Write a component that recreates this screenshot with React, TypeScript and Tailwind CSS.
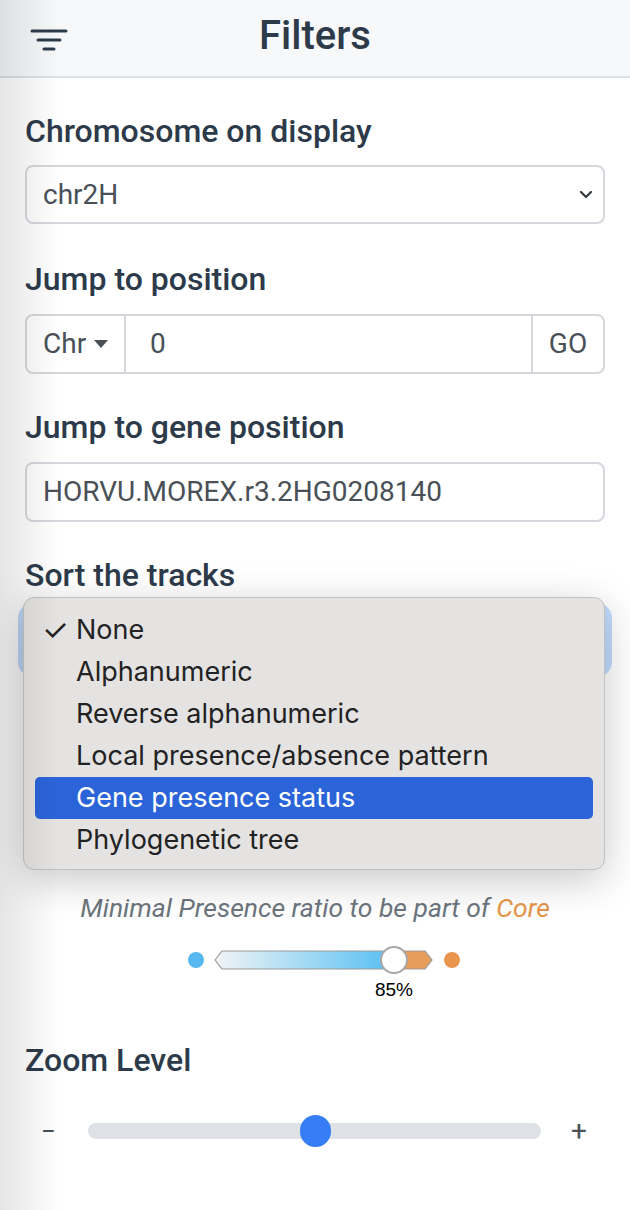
import React from "react";

const labelCls =
  "text-[32px] leading-[37px] font-medium text-[#2d3a4a] font-['Roboto',sans-serif]";
const inputText = "text-[28px] text-[#495057] font-['Roboto',sans-serif]";

function FilterIcon() {
  return (
    <svg width="40" height="24" viewBox="0 0 40 24" className="block">
      <g stroke="#2d3a4a" strokeWidth="3" strokeLinecap="round">
        <line x1="2" y1="3" x2="36" y2="3" />
        <line x1="8" y1="12" x2="30" y2="12" />
        <line x1="14" y1="21" x2="24" y2="21" />
      </g>
    </svg>
  );
}

const items = [
  "None",
  "Alphanumeric",
  "Reverse alphanumeric",
  "Local presence/absence pattern",
  "Gene presence status",
  "Phylogenetic tree",
];

function Dropdown() {
  return (
    <div className="absolute top-[-15px] left-[-4px] w-[582px] h-[273px] rounded-[11px] border border-[#c2c1c0] bg-[#e4e3e2] shadow-[0_10px_40px_rgba(0,0,0,0.22)] pt-[11px] z-10">
      {items.map((it, i) => {
        const active = i === 4;
        return (
          <div
            key={it}
            className={
              "mx-[11px] h-[42px] flex items-center rounded-[5px] text-[27px] font-['Inter',sans-serif] " +
              (active ? "bg-[#2b63d9] text-white" : "text-[#222222]")
            }
          >
            <span className="w-[41px] pl-[7px] text-[30px] leading-none">{i === 0 ? "✓" : ""}</span>
            <span>{it}</span>
          </div>
        );
      })}
    </div>
  );
}

function PresenceSlider() {
  return (
    <svg width="290" height="30" viewBox="0 0 290 30" className="block">
      <defs>
        <linearGradient id="g1" x1="35" y1="0" x2="214" y2="0" gradientUnits="userSpaceOnUse">
          <stop offset="0" stopColor="#f1f4f5" />
          <stop offset="1" stopColor="#56bff3" />
        </linearGradient>
      </defs>
      <circle cx="16" cy="15" r="8" fill="#56b7f1" />
      <polygon points="35,15 42,6 214,6 214,24 42,24" fill="url(#g1)" />
      <polygon points="214,6 245,6 252,15 245,24 214,24" fill="#e99d5d" />
      <polygon points="35,15 42,6 245,6 252,15 245,24 42,24" fill="none" stroke="#9a9a9a" strokeWidth="1.2" />
      <circle cx="214" cy="15" r="13" fill="#ffffff" stroke="#a8a8a8" strokeWidth="2" />
      <circle cx="272" cy="15" r="8" fill="#e8964f" />
    </svg>
  );
}

export default function App() {
  return (
    <div className="relative w-[630px] h-[1210px] overflow-hidden bg-white font-['Roboto',sans-serif]">
      <div className="h-[78px] bg-[#f7f8fa] border-b-2 border-[#dee2e6] flex items-center relative">
        <div className="absolute left-[30px] top-[28px]">
          <FilterIcon />
        </div>
        <div className="w-full text-center text-[40px] leading-[48px] font-medium text-[#2d3a4a] pb-[4px]">
          Filters
        </div>
      </div>

      <div className="px-[25px] pt-[35px] flex flex-col">
        <div className={labelCls}>Chromosome on display</div>
        <div className="mt-[15px] h-[59px] rounded-[8px] border-2 border-[#d4d8dc] flex items-center justify-between pl-[16px] pr-[10px]">
          <span className={inputText}>chr2H</span>
          <svg width="14" height="10" viewBox="0 0 14 10">
            <path d="M2 2 L7 7 L12 2" fill="none" stroke="#343a40" strokeWidth="2.2" strokeLinecap="round" strokeLinejoin="round" />
          </svg>
        </div>

        <div className={labelCls + " mt-[37px]"}>Jump to position</div>
        <div className="mt-[16px] h-[60px] rounded-[8px] border-2 border-[#d4d8dc] flex items-stretch">
          <div className="w-[99px] flex items-center pl-[16px] gap-[8px] border-r-2 border-[#d4d8dc]">
            <span className={inputText}>Chr</span>
            <svg width="14" height="8" viewBox="0 0 14 8">
              <path d="M0 0 L14 0 L7 8 Z" fill="#495057" />
            </svg>
          </div>
          <div className="flex-1 flex items-center pl-[24px]">
            <span className={inputText}>0</span>
          </div>
          <div className="w-[72px] flex items-center justify-center border-l-2 border-[#d4d8dc]">
            <span className={inputText}>GO</span>
          </div>
        </div>

        <div className={labelCls + " mt-[35px]"}>Jump to gene position</div>
        <div className="mt-[16px] h-[60px] rounded-[8px] border-2 border-[#d4d8dc] flex items-center pl-[16px]">
          <span className={inputText}>HORVU.MOREX.r3.2HG0208140</span>
        </div>

        <div className={labelCls + " mt-[35px]"}>Sort the tracks</div>
        <div className="mt-[16px] h-[60px] rounded-[8px] border-2 border-[#86b7fe] shadow-[0_0_0_7px_rgba(13,110,253,0.25)] relative">
          <Dropdown />
        </div>

        <div className="mt-[223px] text-center text-[26.5px] leading-[30px] italic text-[#6c757d]">
          Minimal Presence ratio to be part of <span className="text-[#e8944a]">Core</span>
        </div>

        <div className="mt-[22px] ml-[155px]">
          <PresenceSlider />
        </div>
        <div className="mt-[5px] ml-[339px] w-[60px] text-center text-[19px] leading-[20px] text-black font-['Liberation_Sans',sans-serif]">
          85%
        </div>

        <div className={labelCls + " mt-[42px]"}>Zoom Level</div>
        <div className="mt-[36px] h-[32px] flex items-center">
          <span className="w-[63px] pl-[16px] text-[26px] text-[#495057] leading-none">−</span>
          <div className="relative w-[453px] h-[16px] rounded-full bg-[#dee2e6]">
            <div className="absolute top-[-8px] left-[212px] w-[31px] h-[32px] rounded-full bg-[#377df6]" />
          </div>
          <span className="flex-1 text-center text-[28px] text-[#495057] leading-none pl-[12px]">+</span>
        </div>
      </div>

      <div className="pointer-events-none absolute inset-y-0 left-0 w-[60px] bg-linear-to-r from-[rgba(0,0,0,0.1)] to-transparent z-20" />
    </div>
  );
}
